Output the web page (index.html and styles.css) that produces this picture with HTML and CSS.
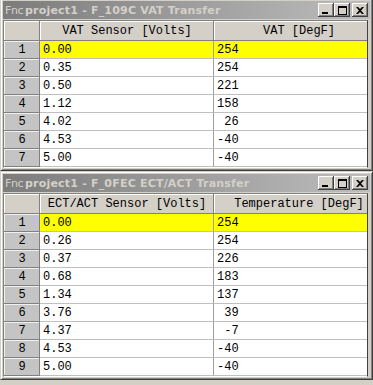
FILE: index.html
```html
<!DOCTYPE html>
<html lang="en">
<head>
    <meta charset="UTF-8">
    <meta name="viewport" content="width=device-width, initial-scale=1.0">
    <title>Fnc project1 - Transfer tables</title>
    <link rel="stylesheet" href="styles.css">
</head>
<body>
    <div class="window first">
        <div class="titlebar">
            <span class="icon">Fnc</span>
            <span class="title">project1 - F_109C VAT Transfer</span>
            <div class="controls">
                <span class="ctl"><svg width="8" height="7" viewBox="0 0 8 7"><rect x="0" y="5" width="6" height="2"/></svg></span>
                <span class="ctl"><svg width="9" height="9" viewBox="0 0 9 9"><path d="M0 0h9v9h-9z M1 2v6h7v-6z" fill-rule="evenodd"/></svg></span>
                <span class="ctl close"><svg width="8" height="7" viewBox="0 0 8 7"><path d="M0 0h2l2 2 2-2h2l-3 3.5 3 3.5h-2l-2-2-2 2h-2l3-3.5z"/></svg></span>
            </div>
        </div>
        <div class="sheet">
            <div class="row head"><div class="num"></div><div class="cell">VAT Sensor [Volts]</div><div class="cell">VAT [DegF]</div></div>
            <div class="row sel"><div class="num">1</div><div class="cell">0.00</div><div class="cell">254</div></div>
            <div class="row"><div class="num">2</div><div class="cell">0.35</div><div class="cell">254</div></div>
            <div class="row"><div class="num">3</div><div class="cell">0.50</div><div class="cell">221</div></div>
            <div class="row"><div class="num">4</div><div class="cell">1.12</div><div class="cell">158</div></div>
            <div class="row"><div class="num">5</div><div class="cell">4.02</div><div class="cell"> 26</div></div>
            <div class="row"><div class="num">6</div><div class="cell">4.53</div><div class="cell">-40</div></div>
            <div class="row"><div class="num">7</div><div class="cell">5.00</div><div class="cell">-40</div></div>
        </div>
    </div>

    <div class="window">
        <div class="titlebar">
            <span class="icon">Fnc</span>
            <span class="title">project1 - F_0FEC ECT/ACT Transfer</span>
            <div class="controls">
                <span class="ctl"><svg width="8" height="7" viewBox="0 0 8 7"><rect x="0" y="5" width="6" height="2"/></svg></span>
                <span class="ctl"><svg width="9" height="9" viewBox="0 0 9 9"><path d="M0 0h9v9h-9z M1 2v6h7v-6z" fill-rule="evenodd"/></svg></span>
                <span class="ctl close"><svg width="8" height="7" viewBox="0 0 8 7"><path d="M0 0h2l2 2 2-2h2l-3 3.5 3 3.5h-2l-2-2-2 2h-2l3-3.5z"/></svg></span>
            </div>
        </div>
        <div class="sheet">
            <div class="row head"><div class="num"></div><div class="cell">ECT/ACT Sensor [Volts]</div><div class="cell">Temperature [DegF]</div></div>
            <div class="row sel"><div class="num">1</div><div class="cell">0.00</div><div class="cell">254</div></div>
            <div class="row"><div class="num">2</div><div class="cell">0.26</div><div class="cell">254</div></div>
            <div class="row"><div class="num">3</div><div class="cell">0.37</div><div class="cell">226</div></div>
            <div class="row"><div class="num">4</div><div class="cell">0.68</div><div class="cell">183</div></div>
            <div class="row"><div class="num">5</div><div class="cell">1.34</div><div class="cell">137</div></div>
            <div class="row"><div class="num">6</div><div class="cell">3.76</div><div class="cell"> 39</div></div>
            <div class="row"><div class="num">7</div><div class="cell">4.37</div><div class="cell"> -7</div></div>
            <div class="row"><div class="num">8</div><div class="cell">4.53</div><div class="cell">-40</div></div>
            <div class="row"><div class="num">9</div><div class="cell">5.00</div><div class="cell">-40</div></div>
        </div>
    </div>
</body>
</html>
```

FILE: styles.css
```css
body {
    margin: 0;
    width: 373px;
    height: 385px;
    overflow: hidden;
    background: #d4d0c8;
    font-family: "Liberation Mono", monospace;
}
.window {
    box-sizing: border-box;
    width: 373px;
    padding: 2px;
    background: #d4d0c8;
    border: 1px solid;
    border-color: #d4d0c8 #404040 #404040 #d4d0c8;
    box-shadow: inset 1px 1px #fff, inset -1px -1px #808080;
}
.window.first {
    margin-top: -2px;
}
.titlebar {
    display: flex;
    align-items: center;
    height: 18px;
    padding-left: 2px;
    margin-bottom: 1px;
    background: linear-gradient(90deg, #7c7c7c, #bdbdbd);
    color: #d4d0c8;
}
.icon {
    font-family: "DejaVu Sans", sans-serif;
    font-size: 11px;
    width: 20px;
    letter-spacing: -0.4px;
}
.title {
    font-family: "DejaVu Sans", sans-serif;
    font-weight: bold;
    font-size: 11px;
    letter-spacing: 0.2px;
    white-space: nowrap;
}
.controls {
    margin-left: auto;
    display: flex;
    padding-right: 2px;
}
.ctl {
    box-sizing: border-box;
    width: 16px;
    height: 14px;
    display: flex;
    align-items: center;
    justify-content: center;
    background: #d4d0c8;
    box-shadow: inset -1px -1px #404040, inset 1px 1px #fff, inset -2px -2px #808080;
}
.ctl svg {
    fill: #000;
    margin-top: 1px;
}
.ctl.close {
    margin-left: 2px;
}
.sheet {
    width: 363px;
    overflow: hidden;
    border: 1px solid;
    border-color: #808080 #404040 #fff #808080;
    background: #fff;
}
.row {
    display: flex;
    height: 18px;
    font-size: 12px;
    white-space: pre;
}
.row .num {
    box-sizing: border-box;
    flex: 0 0 36px;
    display: flex;
    align-items: center;
    justify-content: center;
    background: #c4c4c4;
    box-shadow: inset -1px -1px #808080, inset 1px 1px #f0f0f0;
}
.row .cell {
    box-sizing: border-box;
    display: flex;
    align-items: center;
    padding-left: 3px;
    border-bottom: 1px solid #c0c0c0;
    flex: 0 0 170px;
}
.row .cell:nth-child(2) {
    flex-basis: 174px;
    border-right: 1px solid #a0a0a0;
}
.row.sel .cell {
    background: #ffff00;
}
.row.head {
    height: 20px;
}
.row.head .num,
.row.head .cell {
    background: #d4d0c8;
    justify-content: center;
    padding-left: 0;
    border: none;
    box-shadow: inset -1px -1px #808080, inset 1px 1px #fff;
}
```
